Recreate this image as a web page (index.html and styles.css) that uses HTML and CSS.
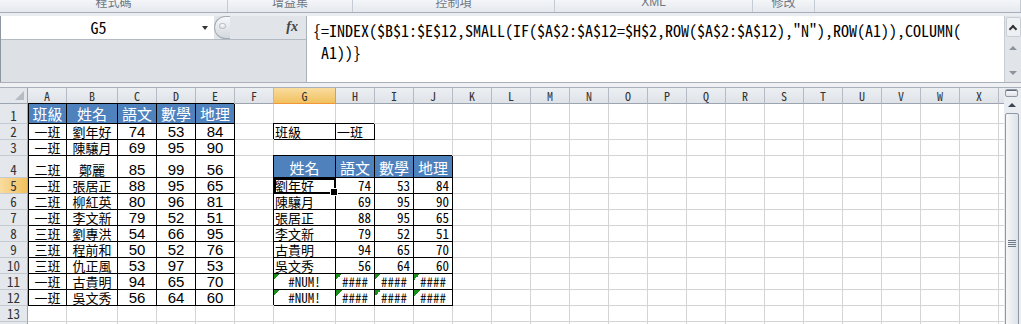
FILE: index.html
```html
<!DOCTYPE html>
<html lang="zh-Hant">
<head>
  <meta charset="UTF-8" />
  <title>班級成績查詢</title>
  <link rel="stylesheet" href="styles.css">
</head>
<body>

  <div class="ribbon">
    <div class="group"><span>程式碼</span></div>
    <div class="group"><span>增益集</span></div>
    <div class="group"><span>控制項</span></div>
    <div class="group"><span class="latin">XML</span></div>
    <div class="group"><span>修改</span></div>
    <div class="group"></div>
  </div>

  <div class="fbar">
    <div class="left">
      <div class="top">
        <div class="namebox"><span class="ref">G5</span><span class="drop"></span></div>
        <div class="knob"><span></span></div>
        <div class="fx">fx</div>
      </div>
    </div>
    <div class="formula">
      <div>{=INDEX($B$1:$E$12,SMALL(IF($A$2:$A$12=$H$2,ROW($A$2:$A$12),"N"),ROW(A1)),COLUMN(</div>
      <div>&nbsp;A1))}</div>
    </div>
    <div class="fscroll">
      <div class="collapse"><span class="chev"></span></div>
      <span class="tri up"></span>
      <span class="tri down"></span>
    </div>
  </div>
  <div class="gap"></div>

  <div class="sheet">
    <div class="grid">
      <!-- column headers -->
      <div class="corner"><span></span></div>
      <div class="ch">A</div>
      <div class="ch">B</div>
      <div class="ch">C</div>
      <div class="ch">D</div>
      <div class="ch">E</div>
      <div class="ch">F</div>
      <div class="ch sel">G</div>
      <div class="ch">H</div>
      <div class="ch">I</div>
      <div class="ch">J</div>
      <div class="ch-rest">
        <span>K</span><span>L</span><span>M</span><span>N</span><span>O</span><span>P</span><span>Q</span>
        <span>R</span><span>S</span><span>T</span><span>U</span><span>V</span><span>W</span><span>X</span>
        <span></span>
      </div>

      <!-- row 1 -->
      <div class="rh">1</div>
      <div class="c b hd first">班級</div>
      <div class="c b hd">姓名</div>
      <div class="c b hd">語文</div>
      <div class="c b hd">數學</div>
      <div class="c b hd">地理</div>
      <div class="c"></div>
      <div class="c"></div>
      <div class="c"></div>
      <div class="c"></div>
      <div class="c"></div>
      <div class="fill"></div>

      <!-- row 2 -->
      <div class="rh">2</div>
      <div class="c b first">一班</div>
      <div class="c b">劉年好</div>
      <div class="c b n">74</div>
      <div class="c b n">53</div>
      <div class="c b n">84</div>
      <div class="c"></div>
      <div class="c b m l">班級</div>
      <div class="c b m l">一班</div>
      <div class="c"></div>
      <div class="c"></div>
      <div class="fill"></div>

      <!-- row 3 -->
      <div class="rh">3</div>
      <div class="c b first">一班</div>
      <div class="c b">陳驤月</div>
      <div class="c b n">69</div>
      <div class="c b n">95</div>
      <div class="c b n">90</div>
      <div class="c"></div>
      <div class="c"></div>
      <div class="c"></div>
      <div class="c"></div>
      <div class="c"></div>
      <div class="fill"></div>

      <!-- row 4 -->
      <div class="rh">4</div>
      <div class="c b first">二班</div>
      <div class="c b">鄭麗</div>
      <div class="c b n">85</div>
      <div class="c b n">99</div>
      <div class="c b n">56</div>
      <div class="c"></div>
      <div class="c b hd">姓名</div>
      <div class="c b hd">語文</div>
      <div class="c b hd">數學</div>
      <div class="c b hd">地理</div>
      <div class="fill"></div>

      <!-- row 5 -->
      <div class="rh sel">5</div>
      <div class="c b first">一班</div>
      <div class="c b">張居正</div>
      <div class="c b n">88</div>
      <div class="c b n">95</div>
      <div class="c b n">65</div>
      <div class="c"></div>
      <div class="c b m l active">劉年好</div>
      <div class="c b m r">74</div>
      <div class="c b m r">53</div>
      <div class="c b m r">84</div>
      <div class="fill"></div>

      <!-- row 6 -->
      <div class="rh">6</div>
      <div class="c b first">二班</div>
      <div class="c b">柳紅英</div>
      <div class="c b n">80</div>
      <div class="c b n">96</div>
      <div class="c b n">81</div>
      <div class="c"></div>
      <div class="c b m l">陳驤月</div>
      <div class="c b m r">69</div>
      <div class="c b m r">95</div>
      <div class="c b m r">90</div>
      <div class="fill"></div>

      <!-- row 7 -->
      <div class="rh">7</div>
      <div class="c b first">一班</div>
      <div class="c b">李文新</div>
      <div class="c b n">79</div>
      <div class="c b n">52</div>
      <div class="c b n">51</div>
      <div class="c"></div>
      <div class="c b m l">張居正</div>
      <div class="c b m r">88</div>
      <div class="c b m r">95</div>
      <div class="c b m r">65</div>
      <div class="fill"></div>

      <!-- row 8 -->
      <div class="rh">8</div>
      <div class="c b first">三班</div>
      <div class="c b">劉專洪</div>
      <div class="c b n">54</div>
      <div class="c b n">66</div>
      <div class="c b n">95</div>
      <div class="c"></div>
      <div class="c b m l">李文新</div>
      <div class="c b m r">79</div>
      <div class="c b m r">52</div>
      <div class="c b m r">51</div>
      <div class="fill"></div>

      <!-- row 9 -->
      <div class="rh">9</div>
      <div class="c b first">三班</div>
      <div class="c b">程前和</div>
      <div class="c b n">50</div>
      <div class="c b n">52</div>
      <div class="c b n">76</div>
      <div class="c"></div>
      <div class="c b m l">古貴明</div>
      <div class="c b m r">94</div>
      <div class="c b m r">65</div>
      <div class="c b m r">70</div>
      <div class="fill"></div>

      <!-- row 10 -->
      <div class="rh">10</div>
      <div class="c b first">三班</div>
      <div class="c b">仇正風</div>
      <div class="c b n">53</div>
      <div class="c b n">97</div>
      <div class="c b n">53</div>
      <div class="c"></div>
      <div class="c b m l">吳文秀</div>
      <div class="c b m r">56</div>
      <div class="c b m r">64</div>
      <div class="c b m r">60</div>
      <div class="fill"></div>

      <!-- row 11 -->
      <div class="rh">11</div>
      <div class="c b first">一班</div>
      <div class="c b">古貴明</div>
      <div class="c b n">94</div>
      <div class="c b n">65</div>
      <div class="c b n">70</div>
      <div class="c"></div>
      <div class="c b m err">#NUM!</div>
      <div class="c b m err">####</div>
      <div class="c b m err">####</div>
      <div class="c b m err">####</div>
      <div class="fill"></div>

      <!-- row 12 -->
      <div class="rh">12</div>
      <div class="c b first">一班</div>
      <div class="c b">吳文秀</div>
      <div class="c b n">56</div>
      <div class="c b n">64</div>
      <div class="c b n">60</div>
      <div class="c"></div>
      <div class="c b m err">#NUM!</div>
      <div class="c b m err">####</div>
      <div class="c b m err">####</div>
      <div class="c b m err">####</div>
      <div class="fill"></div>

      <!-- row 13 -->
      <div class="rh">13</div>
      <div class="c"></div>
      <div class="c"></div>
      <div class="c"></div>
      <div class="c"></div>
      <div class="c"></div>
      <div class="c"></div>
      <div class="c"></div>
      <div class="c"></div>
      <div class="c"></div>
      <div class="c"></div>
      <div class="fill"></div>

      <!-- row 14 -->
      <div class="rh">14</div>
      <div class="c"></div>
      <div class="c"></div>
      <div class="c"></div>
      <div class="c"></div>
      <div class="c"></div>
      <div class="c"></div>
      <div class="c"></div>
      <div class="c"></div>
      <div class="c"></div>
      <div class="c"></div>
      <div class="fill"></div>
    </div>

    <div class="vscroll">
      <div class="split"></div>
      <div class="arrow"><span></span></div>
      <div class="thumb"><span></span></div>
    </div>
  </div>

</body>
</html>
```

FILE: styles.css
```css
* {
  box-sizing: border-box;
}
body {
  margin: 0;
  width: 1021px;
  height: 324px;
  overflow: hidden;
  background: #fff;
  font-family: "Noto Sans CJK TC", sans-serif;
  color: #000;
}

/* ribbon group captions, cut off at the top */
.ribbon {
  display: grid;
  grid-template-columns: 228px 125px 202px 198px 62px 1fr;
  height: 13px;
  background: linear-gradient(#f4f6f9, #e5e8ed);
  border-bottom: 1px solid #a7aeb7;
  overflow: hidden;
}
.group {
  border-right: 1px solid #c5cbd3;
  text-align: center;
  overflow: hidden;
}
.group span {
  display: block;
  margin-top: -6px;
  font-size: 12px;
  line-height: 16px;
  color: #6d7683;
}
.group .latin {
  font-family: "Liberation Sans", sans-serif;
}

/* formula bar */
.fbar {
  display: flex;
  height: 70px;
  padding-top: 3px;
  background: #e9ecf0;
  border-bottom: 1px solid #a9b0b9;
}
.left {
  width: 307px;
  background: #dde1e6;
  border-left: 1px solid #8e969f;
  border-right: 1px solid #a9b0b9;
}
.top {
  display: flex;
  height: 24px;
  background: #e1e4e9;
  border-bottom: 1px solid #b3bac2;
}
.namebox {
  width: 213px;
  display: flex;
  background: #fff;
}
.ref {
  flex: 1;
  text-align: center;
  font: 16px/23px "Noto Sans Mono CJK TC", "Liberation Mono", monospace;
}
.drop {
  width: 18px;
  display: flex;
  align-items: center;
  justify-content: center;
}
.drop::before {
  content: "";
  border-left: 3px solid transparent;
  border-right: 3px solid transparent;
  border-top: 4px solid #333;
}
.knob {
  width: 16px;
  display: flex;
  justify-content: center;
  padding-top: 6px;
  border: 1px solid #a4acb6;
  border-right: 0;
  border-radius: 12px 0 0 12px;
  background: linear-gradient(#f7f8fa, #d3d8de);
}
.knob span {
  width: 7px;
  height: 6px;
  border-radius: 50%;
  border: 1px solid #b9c0c8;
  background: linear-gradient(#fff, #dfe3e8);
}
.fx {
  flex: 1;
  text-align: right;
  padding-right: 8px;
  font: italic bold 14px/22px "Liberation Serif", serif;
  color: #444;
}
.formula {
  flex: 1;
  padding: 3px 0 0 6px;
  background: #fff;
  font: 16px/22px "Noto Sans Mono CJK TC", "Liberation Mono", monospace;
  white-space: nowrap;
  overflow: hidden;
}
.fscroll {
  width: 17px;
  display: flex;
  flex-direction: column;
  align-items: center;
  padding-top: 1px;
  background: #e1e5ea;
  border-left: 1px solid #c8cdd4;
}
.collapse {
  width: 15px;
  height: 20px;
  display: flex;
  align-items: center;
  justify-content: center;
  background: #eef1f4;
  border: 1px solid #c9ced5;
  border-radius: 2px;
}
.chev {
  width: 6px;
  height: 6px;
  margin-top: 3px;
  border-left: 2px solid #333;
  border-top: 2px solid #333;
  transform: rotate(45deg);
}
.tri {
  border-left: 4px solid transparent;
  border-right: 4px solid transparent;
}
.tri.up {
  margin-top: 9px;
  border-bottom: 4px solid #8a939e;
}
.tri.down {
  margin-top: 21px;
  border-top: 4px solid #8a939e;
}
.gap {
  height: 5px;
  background: #eef0f3;
  border-bottom: 1px solid #a9b0b9;
}

/* worksheet */
.sheet {
  display: flex;
}
.grid {
  flex: 1;
  display: grid;
  grid-template-columns: 28px 39px 51px repeat(4, 39px) 62px repeat(3, 39px) 1fr;
  grid-template-rows: 16px 20px 16px 16px 22px repeat(10, 16px);
}
.corner {
  display: flex;
  justify-content: flex-end;
  align-items: flex-end;
  padding: 0 3px 3px 0;
  background: #e3e6ea;
  border-right: 1px solid #9ba4af;
  border-bottom: 1px solid #9ba4af;
}
.corner span {
  border-left: 9px solid transparent;
  border-bottom: 9px solid #b7bcc3;
}
.ch, .ch-rest span {
  background: linear-gradient(#eceff2, #dfe3e8);
  border-right: 1px solid #b4bbc4;
  border-bottom: 1px solid #9ba4af;
  text-align: center;
  font: 12px/15px "Noto Sans Mono CJK TC", "Liberation Mono", monospace;
  color: #333;
}
.ch.sel {
  background: linear-gradient(#f9dc9e, #f1c15f);
  border-right-color: #c9a35a;
  border-bottom-color: #f29536;
}
.ch-rest {
  display: grid;
  grid-template-columns: repeat(14, 39px) 1fr;
}
.ch-rest span:last-child {
  border-right: 0;
}
.rh {
  display: flex;
  align-items: flex-end;
  justify-content: center;
  background: #e4e7eb;
  border-right: 1px solid #9ba4af;
  border-bottom: 1px solid #c5cad1;
  font: 13px/14px "Noto Sans Mono CJK TC", "Liberation Mono", monospace;
  color: #333;
}
.rh.sel {
  background: linear-gradient(to right, #f9dc9e, #f1c15f);
  border-right-color: #f29536;
}
.c {
  display: flex;
  align-items: flex-end;
  justify-content: center;
  border-right: 1px solid #d4d4d4;
  border-bottom: 1px solid #d4d4d4;
  font-size: 13px;
  line-height: 15px;
  white-space: nowrap;
}
.fill {
  border-bottom: 1px solid #d4d4d4;
  background: repeating-linear-gradient(to right, transparent 0 38px, #d4d4d4 38px 39px);
}

/* cell formats */
.b {
  border-color: #000;
  box-shadow: -1px -1px 0 #000;
}
.b.first {
  border-left: 1px solid #000;
  box-shadow: 0 -1px 0 #000;
}
.hd {
  background: #4f81bd;
  color: #fff;
  font-size: 15px;
  line-height: 19px;
}
.n {
  font-family: "Liberation Sans", sans-serif;
  font-size: 15px;
  line-height: 14px;
}
.m {
  font-family: "Noto Sans Mono CJK TC", "Liberation Mono", monospace;
}
.l {
  justify-content: flex-start;
  padding-left: 1px;
}
.r {
  justify-content: flex-end;
  padding-right: 3px;
}
.err {
  background: linear-gradient(135deg, #1a8f1a 50%, transparent 50%) 0 0 / 6px 6px no-repeat;
}
.active {
  position: relative;
  outline: 2px solid #000;
  outline-offset: -2px;
}
.active::after {
  content: "";
  position: absolute;
  right: -3px;
  bottom: -3px;
  width: 6px;
  height: 6px;
  background: #000;
  border: 1px solid #fff;
}

/* vertical scroll bar */
.vscroll {
  width: 17px;
  display: flex;
  flex-direction: column;
  padding-left: 1px;
  background: #e9ecf0;
}
.split {
  width: 13px;
  height: 8px;
  margin-top: 1px;
  border: 1px solid #8f99a5;
  border-radius: 2px;
  background: linear-gradient(#fbfcfd, #dfe3e8);
  box-shadow: inset 0 1px 0 #5f6874;
}
.arrow {
  height: 16px;
  width: 14px;
  display: flex;
  align-items: center;
  justify-content: center;
}
.arrow span {
  border-left: 4px solid transparent;
  border-right: 4px solid transparent;
  border-bottom: 4px solid #3b4450;
}
.thumb {
  width: 14px;
  height: 260px;
  flex-shrink: 0;
  display: flex;
  align-items: center;
  justify-content: center;
  border: 1px solid #8e98a4;
  border-radius: 2px;
  background: linear-gradient(to right, #f6f7f9, #dde2e7);
}
.thumb span {
  width: 8px;
  height: 7px;
  background: repeating-linear-gradient(#6f7a88 0 1px, transparent 1px 2px);
}
```
